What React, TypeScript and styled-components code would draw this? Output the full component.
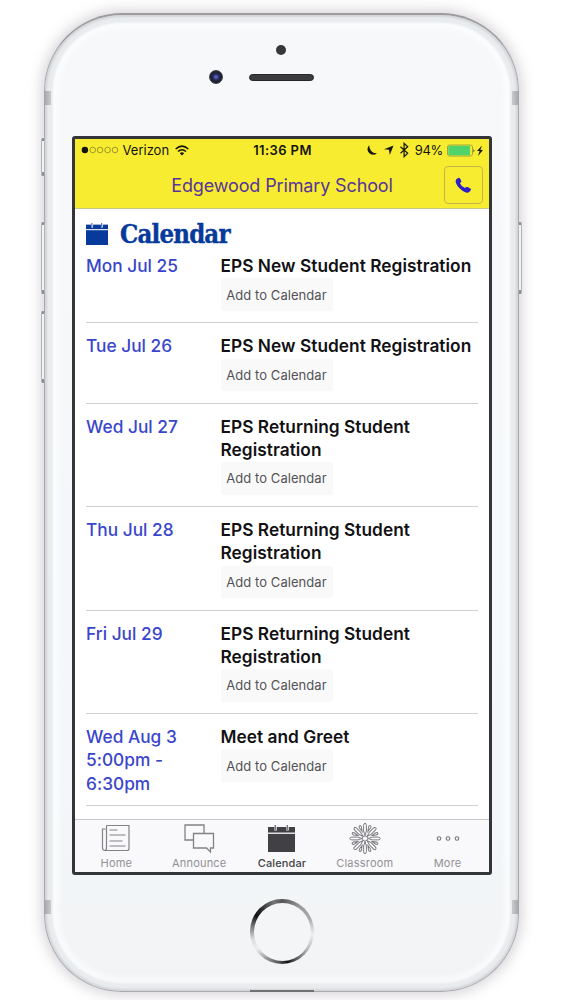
import React from "react";
import styled, { createGlobalStyle } from "styled-components";

const Global = createGlobalStyle`
  * { box-sizing: border-box; }
  body { margin: 0; background: #fff; font-family: Inter, "Liberation Sans", sans-serif; }
`;

const Stage = styled.main`
  width: 563px;
  height: 1000px;
  padding: 13px 0 0 44px;
  overflow: hidden;
  background: #fff;
`;

const Phone = styled.div`
  position: relative;
  width: 475px;
  height: 979px;
  padding: 121px 0 0 27px;
  border: 1px solid #a9a9ac;
  border-top: 2px solid #9d9b9e;
  border-radius: 78px;
  background: linear-gradient(#f7f8fa, #f3f7f9 80%, #f2f3f5);
  box-shadow: 0 0 14px 2px rgba(95, 80, 95, 0.28), inset 0 0 2px 2px #d3d6d9, inset 0 0 1px 6px #e9ebed,
    inset 0 0 2px 8px #e9edf0, inset 0 0 7px 12px #fdfefe, inset 0 -9px 3px #d8d9da;
`;

const Antenna = styled.i<{ $right?: boolean; $y: number }>`
  position: absolute;
  top: ${(p) => p.$y}px;
  ${(p) => (p.$right ? "right: -1px" : "left: -1px")};
  width: 7px;
  height: 14px;
  background: linear-gradient(${(p) => (p.$right ? "270deg" : "90deg")}, #a2a5a8, #c8cacb);
`;

const SideButton = styled.i<{ $right?: boolean; $y: number; $h: number }>`
  position: absolute;
  top: ${(p) => p.$y}px;
  ${(p) => (p.$right ? "right: -4px" : "left: -4px")};
  width: 4px;
  height: ${(p) => p.$h}px;
  border: 1px solid #b1b4b5;
  border-top: 3px solid #8b8e90;
  border-bottom: 4px solid #8b8e90;
  border-radius: 2px;
  background: #f1f2f2;
`;

const Sensor = styled.i`
  position: absolute;
  top: 30px;
  left: 231px;
  width: 10px;
  height: 10px;
  border-radius: 50%;
  background: #38383a;
`;

const Camera = styled.i`
  position: absolute;
  top: 55px;
  left: 164px;
  width: 14px;
  height: 14px;
  border-radius: 50%;
  border: 1px solid #3a4147;
  background: radial-gradient(circle, #5260ad 0 1px, #252765 3px, #1c222a 5px);
`;

const Speaker = styled.i`
  position: absolute;
  top: 59px;
  left: 204px;
  width: 65px;
  height: 7px;
  border-radius: 4px;
  border: 1px solid #252527;
  background: #3c3c3e;
`;

const HomeButton = styled.i`
  position: absolute;
  top: 884px;
  left: 205px;
  width: 64px;
  height: 65px;
  border-radius: 50%;
  background: conic-gradient(#555 0deg, #999 35deg, #aaa 65deg, #eee 95deg, #bbb 125deg, #555 155deg, #111 170deg,
    #555 185deg, #999 210deg, #eee 235deg, #ddd 255deg, #777 280deg, #111 302deg, #333 320deg, #777 345deg, #555);
  &::after {
    content: "";
    position: absolute;
    inset: 3.5px;
    border-radius: 50%;
    background: #f4f5f7;
  }
`;

const Port = styled.i`
  position: absolute;
  bottom: -1px;
  left: 205px;
  width: 64px;
  height: 2px;
  background: #707173;
`;

const Screen = styled.section`
  display: flex;
  flex-direction: column;
  width: 420px;
  height: 739px;
  border: 3px solid #343539;
  border-radius: 3px;
  background: #fff;
  overflow: hidden;
`;

const Header = styled.header`
  height: 70px;
  background: #f8ec31;
  border-bottom: 1px solid #cbc58a;
`;

const StatusBar = styled.div`
  display: grid;
  grid-template-columns: 1fr auto 1fr;
  align-items: center;
  height: 22px;
  padding: 0 5px 0 6px;
  color: #14140c;
  font-size: 13px;
`;

const StatusGroup = styled.div<{ $end?: boolean }>`
  display: flex;
  align-items: center;
  justify-content: ${(p) => (p.$end ? "flex-end" : "flex-start")};
  svg { display: block; flex: none; }
`;

const Carrier = styled.span`
  margin: 0 6px 0 3.5px;
  letter-spacing: 0;
`;

const Time = styled.span`
  font-weight: 600;
  letter-spacing: 0.4px;
`;

const Percent = styled.span`
  margin: 0 4px 0 6px;
  letter-spacing: -0.3px;
`;

const TitleBar = styled.div`
  position: relative;
  display: flex;
  align-items: center;
  justify-content: center;
  height: 48px;
  color: #57349a;
  font-size: 18px;
  letter-spacing: -0.14px;
`;

const CallButton = styled.button`
  position: absolute;
  right: 6px;
  top: 5px;
  display: grid;
  place-items: center;
  width: 39px;
  height: 38px;
  padding: 0;
  border: 1px solid #c5b34e;
  border-radius: 4px;
  background: none;
`;

const Content = styled.div`
  flex: 1;
  min-height: 0;
  padding: 0 11px;
  overflow: hidden;
`;

const Heading = styled.h1`
  display: flex;
  align-items: center;
  height: 45px;
  margin: 0;
  padding: 5px 0 0;
  color: #073a9b;
  svg { margin: 0 12.5px 0 -0.5px; }
`;

const HeadingText = styled.span`
  padding-top: 1px;
  font: bold 25.5px/1 "DejaVu Serif Condensed", "DejaVu Serif", serif;
  font-stretch: condensed;
  letter-spacing: -0.8px;
  transform: scaleX(1);
  transform-origin: left;
  -webkit-text-stroke: 0.4px currentColor;
`;

const Row = styled.article<{ $first?: boolean }>`
  display: grid;
  grid-template-columns: 134.5px 1fr;
  padding: ${(p) => (p.$first ? 0 : 11)}px 0 10.5px;
  border-bottom: 1px solid #d0d0d3;
  font-size: 17.3px;
  line-height: 23.2px;
`;

const DateText = styled.div`
  color: #3946cb;
  font-weight: 500;
  letter-spacing: 0.01px;
`;

const EventTitle = styled.div`
  color: #111114;
  font-weight: 600;
  letter-spacing: 0.04px;
  white-space: nowrap;
`;

const AddButton = styled.button`
  display: block;
  width: 112px;
  height: 32.6px;
  margin: 1px 0 1px;
  padding: 0;
  border: 0;
  border-radius: 2px;
  background: #faf9fa;
  color: #535356;
  font: 13px/30px Inter, sans-serif;
  letter-spacing: 0.06px;
`;

const TabBar = styled.nav`
  display: grid;
  grid-template-columns: repeat(5, 1fr);
  height: 53px;
  border-top: 1px solid #c9c6ca;
  background: #f9f8fa;
`;

const Tab = styled.div<{ $active?: boolean }>`
  display: flex;
  flex-direction: column;
  align-items: center;
  padding-top: 2px;
  color: ${(p) => (p.$active ? "#414145" : "#919195")};
  font-size: 11px;
  font-weight: ${(p) => (p.$active ? 500 : 400)};
  letter-spacing: ${(p) => (p.$active ? 0.1 : 0.2)}px;
  line-height: 14px;
`;

const TabIcon = styled.span`
  display: grid;
  place-items: center;
  height: 32px;
  margin-bottom: 2px;
  svg { display: block; }
`;

const CalendarIcon = ({ w, h, bg }: { w: number; h: number; bg: string }) => (
  <svg width={w} height={h} viewBox="0 0 27 27" preserveAspectRatio="none">
    <path d="M0 2h27v25H0z" fill="currentColor" />
    <path d="M0 8.2h27" stroke={bg} strokeWidth="1.3" />
    <path d="M7.5 0v5.6M19.5 0v5.6" stroke={bg} strokeWidth="2.4" />
    <path d="M7.2 0v5M19.2 0v5" stroke="currentColor" strokeWidth="1" />
  </svg>
);

const HomeIcon = () => (
  <svg width="32" height="32" viewBox="0 0 32 32" fill="none" stroke="#828287" strokeWidth="1.2">
    <path d="M6.5 3.5H29v23q0 2-2 2H5q-2.5 0-2.5-2.5V7h3M6.5 3.5V26q0 2-1.5 2M9.5 8h8M9.5 13h16M9.5 19h13M9.5 24h16" />
  </svg>
);

const AnnounceIcon = () => (
  <svg width="32" height="32" viewBox="0 0 32 32" fill="none" stroke="#828287" strokeWidth="1.3">
    <path d="M10.5 18H2V3h19v8M10.5 11.5h20V26h-3v4l-4-4h-13z" />
  </svg>
);

const ClassroomIcon = () => (
  <svg width="32" height="32" viewBox="0 0 32 32" fill="none" stroke="#77777b" strokeWidth="0.95">
    {Array.from({ length: 16 }, (_, i) => (
      <path
        key={i}
        transform={`rotate(${i * 22.5} 16 16.5)`}
        d={
          i % 2
            ? "M16 9L14.9 4.8Q14.8 2.7 16 2.6T17.1 4.8z"
            : "M16 13.5L14.6 9V3.3Q14.7 1.4 16 1.3T17.4 3.3V9z"
        }
      />
    ))}
    <circle cx="16" cy="16.5" r="2.6" fill="#f9f8fa" />
  </svg>
);

const MoreIcon = () => (
  <svg width="32" height="32" viewBox="0 0 32 32" fill="none" stroke="#77777b" strokeWidth="1.1">
    <circle cx="7" cy="16.5" r="1.8" />
    <circle cx="16" cy="16.5" r="1.8" />
    <circle cx="25" cy="16.5" r="1.8" />
  </svg>
);

const SignalIcon = () => (
  <svg width="38" height="8" viewBox="0 0 38 8">
    <circle cx="3.9" cy="4" r="3.2" fill="#111" />
    {[11.7, 19.1, 26.6, 34].map((x) => (
      <circle key={x} cx={x} cy="4" r="2.8" fill="none" stroke="#8a8325" strokeWidth=".8" />
    ))}
  </svg>
);

const WifiIcon = () => (
  <svg width="14" height="11" viewBox="0 0 14 11" fill="none" stroke="#17170c" strokeWidth="1.6">
    <path d="M.7 4Q7-1.8 13.3 4M3 6.5Q7 3 11 6.5" />
    <path d="M4.8 8.2Q7 6.5 9.2 8.2L7 10.5z" fill="#17170c" stroke="none" />
  </svg>
);

const StatusIcons = () => (
  <svg width="44" height="16" viewBox="0 0 44 16">
    <path d="M4.2 3.2A5.2 5.2 0 1 0 12 11.2Q8.4 11.6 6.2 9T4.2 3.2z" fill="#17170c" />
    <path d="M28.5 3.5L24.8 13l-.8-5.2-5-.5z" fill="#17170c" />
    <path d="M35.5 4.8l7.2 6.5-3.6 3.4V1.3l3.6 3.4-7.2 6.5" fill="none" stroke="#17170c" strokeWidth="1.2" />
  </svg>
);

const BatteryIcon = () => (
  <svg width="37" height="13" viewBox="0 0 37 13">
    <rect x=".5" y="1" width="25" height="11" rx="2" fill="#f8ec31" stroke="#87983c" strokeWidth=".8" />
    <rect x="1.3" y="1.8" width="21.8" height="9.4" rx="1" fill="#4fd36a" />
    <path d="M26.5 4.5q1.5 2 0 4z" fill="#333" />
    <path d="M35 1.5L30 7h2.6L31 12l5-6h-2.6z" fill="#17170c" />
  </svg>
);

const PhoneIcon = () => (
  <svg width="17" height="17" viewBox="0 0 17 17">
    <path
      d="M1.3 2.3Q4-.4 5.2 1.7L6.3 4Q6.6 5.2 4.9 6.2q1.3 3 5.1 4.9 1.3-1.6 2.6-1l2.8 1.5q1.5 1.2-1.1 3.4-2.2 1.8-6.5-1Q2.4 10.4.9 5.8.3 3.4 1.3 2.3z"
      fill="#2e1fc8"
    />
  </svg>
);

const events = [
  { date: ["Mon Jul 25"], title: ["EPS New Student Registration"] },
  { date: ["Tue Jul 26"], title: ["EPS New Student Registration"] },
  { date: ["Wed Jul 27"], title: ["EPS Returning Student", "Registration"] },
  { date: ["Thu Jul 28"], title: ["EPS Returning Student", "Registration"] },
  { date: ["Fri Jul 29"], title: ["EPS Returning Student", "Registration"] },
  { date: ["Wed Aug 3", "5:00pm -", "6:30pm"], title: ["Meet and Greet"] },
];

const tabs = [
  { label: "Home", icon: <HomeIcon /> },
  { label: "Announce", icon: <AnnounceIcon /> },
  { label: "Calendar", icon: <CalendarIcon w={27} h={27} bg="#f9f8fa" />, active: true },
  { label: "Classroom", icon: <ClassroomIcon /> },
  { label: "More", icon: <MoreIcon /> },
];

export default function App() {
  return (
    <Stage>
      <Global />
      <Phone>
        <Antenna $y={76} />
        <Antenna $y={76} $right />
        <Antenna $y={885} />
        <Antenna $y={885} $right />
        <SideButton $y={123} $h={38} />
        <SideButton $y={207} $h={72} />
        <SideButton $y={296} $h={72} />
        <SideButton $y={207} $h={72} $right />
        <Sensor />
        <Camera />
        <Speaker />
        <HomeButton />
        <Port />
        <Screen>
          <Header>
            <StatusBar>
              <StatusGroup>
                <SignalIcon />
                <Carrier>Verizon</Carrier>
                <WifiIcon />
              </StatusGroup>
              <Time>11:36 PM</Time>
              <StatusGroup $end>
                <StatusIcons />
                <Percent>94%</Percent>
                <BatteryIcon />
              </StatusGroup>
            </StatusBar>
            <TitleBar>
              Edgewood Primary School
              <CallButton aria-label="Call">
                <PhoneIcon />
              </CallButton>
            </TitleBar>
          </Header>
          <Content>
            <Heading>
              <CalendarIcon w={22} h={22} bg="#fff" />
              <HeadingText>Calendar</HeadingText>
            </Heading>
            {events.map((e, i) => (
              <Row key={i} $first={i === 0}>
                <DateText>
                  {e.date.map((d) => (
                    <div key={d}>{d}</div>
                  ))}
                </DateText>
                <div>
                  <EventTitle>
                    {e.title.map((t) => (
                      <div key={t}>{t}</div>
                    ))}
                  </EventTitle>
                  <AddButton>Add to Calendar</AddButton>
                </div>
              </Row>
            ))}
          </Content>
          <TabBar>
            {tabs.map((t) => (
              <Tab key={t.label} $active={t.active}>
                <TabIcon>{t.icon}</TabIcon>
                {t.label}
              </Tab>
            ))}
          </TabBar>
        </Screen>
      </Phone>
    </Stage>
  );
}
